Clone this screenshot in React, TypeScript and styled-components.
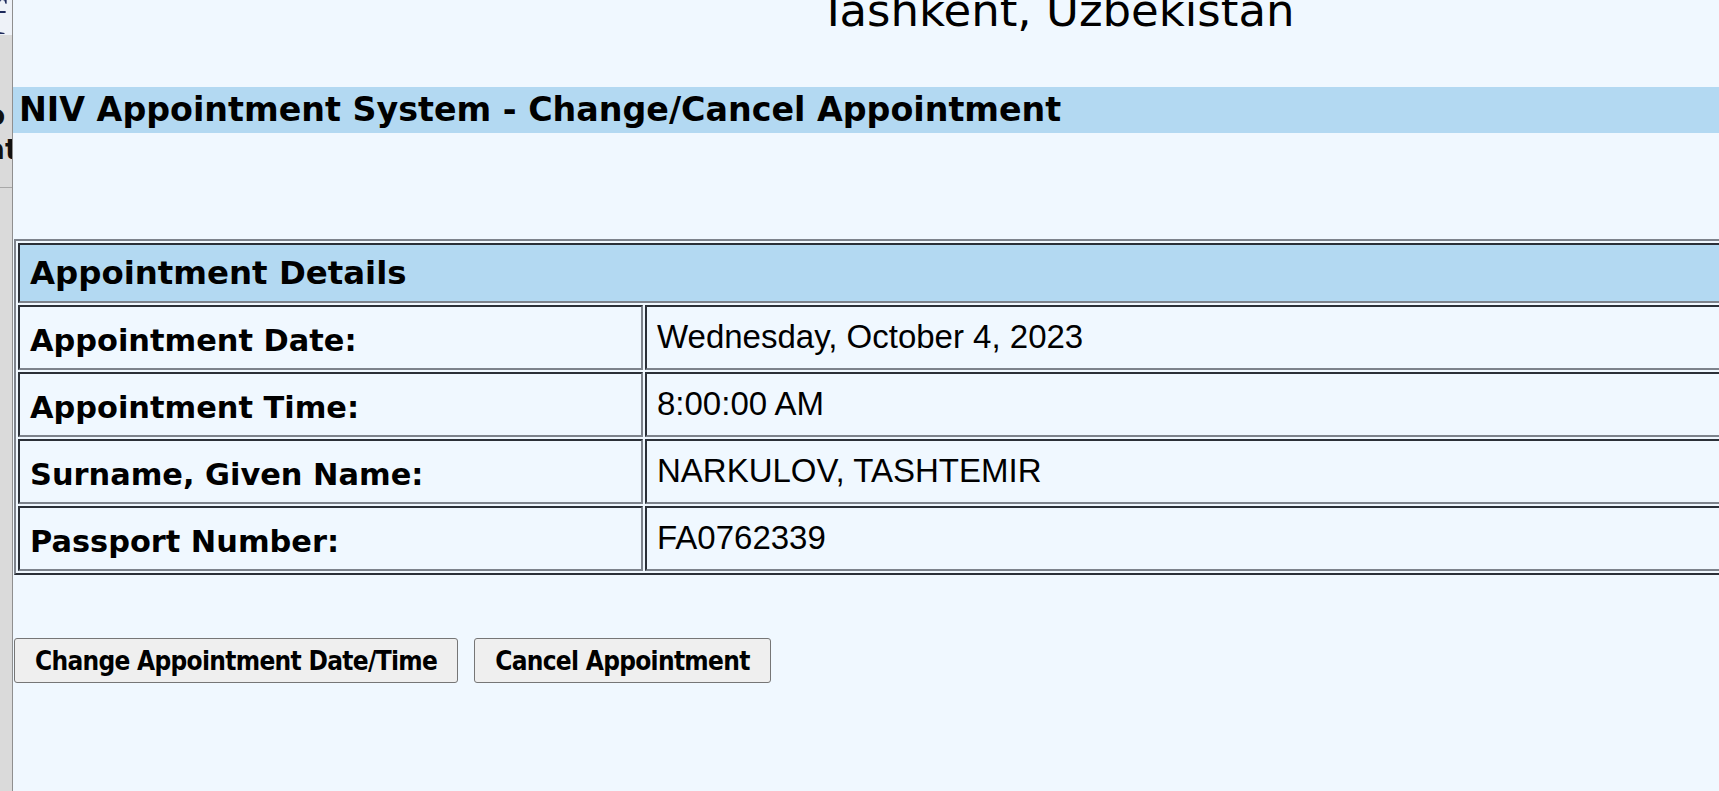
import React from "react";
import styled, { createGlobalStyle } from "styled-components";

const GlobalStyle = createGlobalStyle`
  html, body {
    margin: 0;
    padding: 0;
    overflow: hidden;
    background: #f0f8ff;
  }
`;

const Screen = styled.div`
  display: flex;
  width: 1719px;
  height: 791px;
  overflow: hidden;
`;

const SideStrip = styled.div`
  flex: 0 0 12px;
  display: flex;
  flex-direction: column;
  overflow: hidden;
  border-right: 1px solid #8f8f8f;
  background: #dadada;
`;

const StripTop = styled.div`
  height: 35px;
  background: #eef2f8;
  overflow: hidden;
  font-family: "Liberation Serif", serif;
  font-size: 50px;
  line-height: 34px;
  color: #1d2a5c;
  text-indent: -10px;
  white-space: nowrap;
`;

const StripText = styled.div<{ $top: number }>`
  margin-top: ${(p) => p.$top}px;
  font-family: "DejaVu Sans", sans-serif;
  font-weight: bold;
  font-size: 28px;
  line-height: 30px;
  color: #111;
  text-indent: -14px;
  white-space: nowrap;
`;

const StripRule = styled.div`
  margin-top: 22px;
  height: 1px;
  background: #a8a8a8;
`;

const Panel = styled.div`
  flex: 0 0 2088px;
  display: flex;
  flex-direction: column;
  background: #f0f8ff;
`;

const City = styled.div`
  height: 93px;
  margin-top: -6px;
  text-align: center;
  font-family: "DejaVu Sans", sans-serif;
  font-size: 45px;
  line-height: 34px;
  color: #000;
`;

const TitleBar = styled.h1`
  margin: 0;
  height: 46px;
  padding-left: 6px;
  background: #b3d9f2;
  font-family: "DejaVu Sans", Verdana, sans-serif;
  font-weight: bold;
  font-size: 33.3px;
  line-height: 46px;
  color: #000;
  white-space: nowrap;
`;

const Details = styled.table`
  margin: 106px 0 0 1px;
  width: 2086px;
  border-collapse: separate;
  border-spacing: 2px;
  border-style: solid;
  border-width: 2px;
  border-color: #7d838c #2b3038 #2b3038 #7d838c;
`;

const HeadCell = styled.th`
  height: 56px;
  padding: 0 10px;
  text-align: left;
  background: #b3d9f2;
  font-family: "DejaVu Sans", Verdana, sans-serif;
  font-weight: bold;
  font-size: 32.4px;
  color: #000;
  border-style: solid;
  border-width: 2px;
  border-color: #2b3038 #7d838c #7d838c #2b3038;
`;

const Cell = styled.td<{ $label?: boolean }>`
  height: 56px;
  padding: ${(p) => (p.$label ? "5px 10px 0" : "0 10px 2px")};
  width: ${(p) => (p.$label ? "601px" : "auto")};
  vertical-align: middle;
  font-family: ${(p) =>
    p.$label ? '"DejaVu Sans", Verdana, sans-serif' : '"Liberation Sans", Arial, sans-serif'};
  font-weight: ${(p) => (p.$label ? "bold" : "normal")};
  font-size: ${(p) => (p.$label ? "30.4px" : "33px")};
  color: #000;
  white-space: nowrap;
  border-style: solid;
  border-width: 2px;
  border-color: #2b3038 #7d838c #7d838c #2b3038;
`;

const Actions = styled.div`
  display: flex;
  gap: 16px;
  margin: 63px 0 0 1px;
`;

const Button = styled.button`
  height: 45px;
  padding: 0 20px;
  border: 1px solid #767676;
  border-radius: 3px;
  background: #efefef;
  font-family: "DejaVu Sans Condensed", "DejaVu Sans", sans-serif;
  font-stretch: condensed;
  font-weight: bold;
  font-size: 26px;
  letter-spacing: -0.7px;
  color: #000;
  cursor: pointer;
`;

const rows = [
  ["Appointment Date:", "Wednesday, October 4, 2023"],
  ["Appointment Time:", "8:00:00 AM"],
  ["Surname, Given Name:", "NARKULOV, TASHTEMIR"],
  ["Passport Number:", "FA0762339"],
];

export default function App() {
  return (
    <>
      <GlobalStyle />
      <Screen>
        <SideStrip>
          <StripTop>f</StripTop>
          <StripText $top={66}>o</StripText>
          <StripText $top={4}>at</StripText>
          <StripRule />
        </SideStrip>
        <Panel>
          <City>Tashkent, Uzbekistan</City>
          <TitleBar>NIV Appointment System - Change/Cancel Appointment</TitleBar>
          <Details>
            <tbody>
              <tr>
                <HeadCell colSpan={2}>Appointment Details</HeadCell>
              </tr>
              {rows.map(([label, value]) => (
                <tr key={label}>
                  <Cell $label>{label}</Cell>
                  <Cell>{value}</Cell>
                </tr>
              ))}
            </tbody>
          </Details>
          <Actions>
            <Button>Change Appointment Date/Time</Button>
            <Button>Cancel Appointment</Button>
          </Actions>
        </Panel>
      </Screen>
    </>
  );
}
